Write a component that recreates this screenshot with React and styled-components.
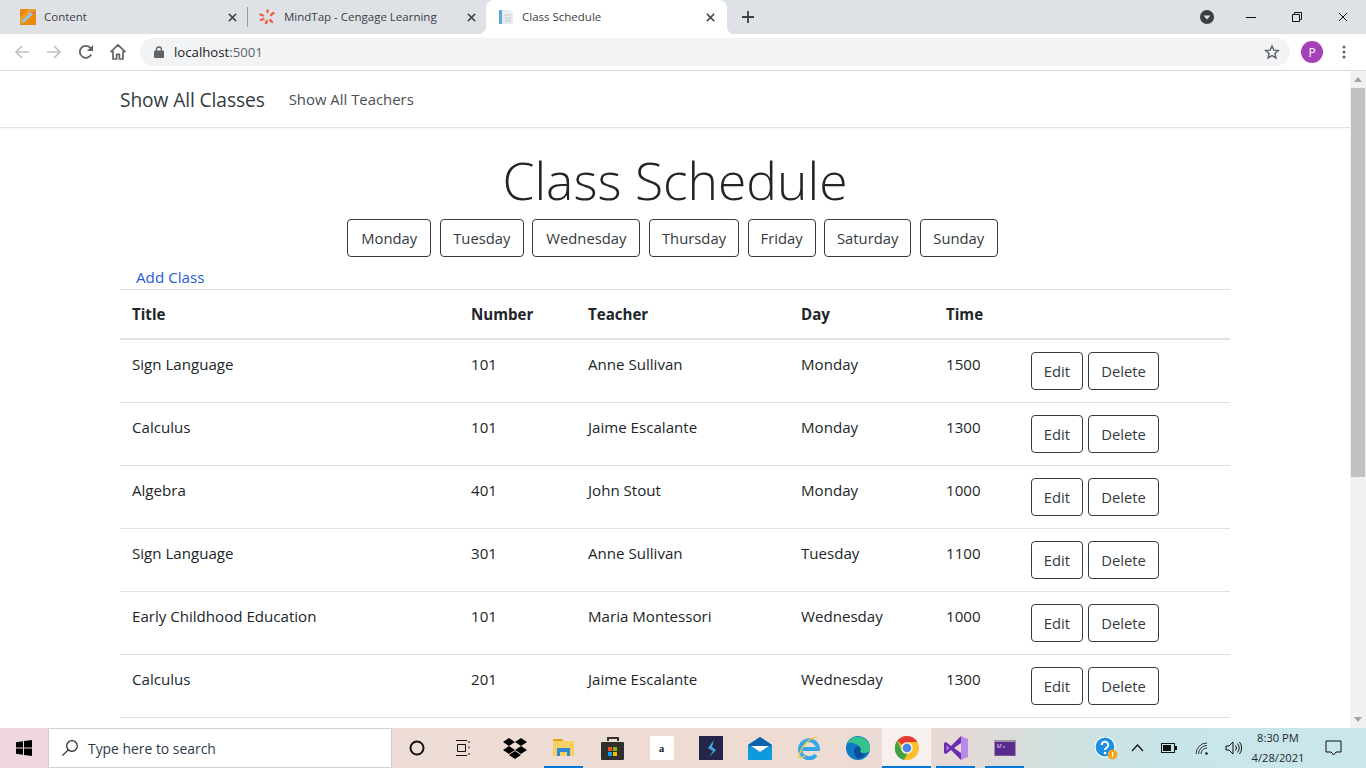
import React from "react";
import styled, { createGlobalStyle } from "styled-components";

const Global = createGlobalStyle`
  html, body { margin: 0; padding: 0; height: 100%; overflow: hidden; background: #fff; }
  #root { height: 100vh; }
  * { box-sizing: border-box; }
`;

const UI = `"Open Sans", "Noto Sans", sans-serif`;

const Screen = styled.div`
  width: 1366px; height: 768px; display: flex; flex-direction: column;
  font-family: ${UI}; color: #212529; overflow: hidden;
`;
const TabStrip = styled.div`
  height: 34px; background: #dee1e6; display: flex; align-items: stretch; flex: none; position: relative;
`;
const Tab = styled.div`
  width: ${p => p.$w}px; flex: none; display: flex; align-items: center; position: relative;
  padding-left: ${p => p.$pl}px; padding-right: ${p => p.$pr}px; gap: 8px;
  font-size: 11.5px; color: #3c4043;
  ${p => p.$active && `
    background:#fff; border-radius: 8px 8px 0 0;
    &::before, &::after { content:""; position:absolute; bottom:0; width:8px; height:8px; }
    &::before { left:-8px; background: radial-gradient(circle at 0 0, transparent 8px, #fff 8.5px); }
    &::after { right:-8px; background: radial-gradient(circle at 100% 0, transparent 8px, #fff 8.5px); }
  `}
`;
const TabLabel = styled.span`flex: 1; white-space: nowrap; overflow: hidden; padding-bottom: 2px;`;
const TabDivider = styled.div`width: 1px; height: 20px; background: #9a9ca0; align-self: center; flex: none;`;
const NewTab = styled.div`width: 42px; display: flex; align-items: center; justify-content: center; flex: none;`;
const WindowRight = styled.div`margin-left: auto; display: flex; align-items: center;`;
const WinBtn = styled.div`width: 46px; height: 30px; display: flex; align-items: center; justify-content: center;`;
const ProfileDrop = styled.div`margin-right: 14px; display: flex;`;

const Toolbar = styled.div`
  height: 37px; background: #fff; display: flex; align-items: center; flex: none;
  border-bottom: 1px solid #dadce0; padding: 0 0 0 6px;
`;
const NavIcon = styled.div`width: 32px; height: 28px; display: flex; align-items: center; justify-content: center; flex: none;`;
const Omnibox = styled.div`
  width: 1150px; height: 28px; margin-left: 6px; background: #f1f3f4; border-radius: 14px; display: flex; align-items: center;
  padding: 0 10px 0 14px; gap: 10px; font-size: 13.2px; color: #202124; flex: none;
`;
const Port = styled.span`color: #5f6368;`;
const Host = styled.span`flex: 1;`;
const Avatar = styled.div`
  width: 22px; height: 22px; border-radius: 50%; background: #a642b8; color: #fff; font-size: 12px;
  display: flex; align-items: center; justify-content: center; margin-left: 11px; flex: none;
`;
const Kebab = styled.div`margin-left: 19px; display: flex;`;

const Viewport = styled.div`flex: 1; min-height: 0; display: flex; overflow: hidden;`;
const Page = styled.div`flex: 1; min-width: 0; overflow: hidden;`;
const Scrollbar = styled.div`
  width: 16px; flex: none; background: #f1f1f1; display: flex; flex-direction: column; align-items: center;
`;
const ScrollArrow = styled.div`height: 17px; flex: none; display: flex; align-items: center; justify-content: center;`;
const Thumb = styled.div`width: 14px; height: 389px; flex: none; background: #c1c1c1;`;
const ScrollGap = styled.div`flex: 1;`;

const Nav = styled.nav`
  height: 57px; border-bottom: 1px solid #dee2e6; box-shadow: 0 1px 3px rgba(0,0,0,.05);
  padding: 0 120px; display: flex; align-items: center; gap: 24px; 
`;
const Brand = styled.a`font-size: 19.2px; color: #343a40; letter-spacing: -0.1px;`;
const NavLink = styled.a`font-size: 14.9px; color: #4a4f54;`;
const Container = styled.main`width: 1110px; margin-left: 120px;`;
const Title = styled.h1`
  margin: 19px 0 0; font-size: 51.6px; line-height: 66px; font-weight: 300; text-align: center; color: #212529;
`;
const DayRow = styled.div`display: flex; justify-content: center; gap: 8.6px; margin-top: 6px; padding-right: 5px;`;
const OutlineButton = styled.button`
  height: 38px; width: ${p => p.$w}px; padding: 0; background: #fff; border: 1px solid #343a40; border-radius: 4px;
  font: 400 14.8px ${UI}; color: #343a40; flex: none;
`;
const AddLink = styled.a`display: block; margin: 10px 0 0 16px; height: 22px; line-height: 20px; font-size: 15.2px; color: #2a5bd7;`;
const Table = styled.table`width: 1110px; table-layout: fixed; border-collapse: collapse; font-size: 15.1px;`;
const Col = styled.col`width: ${p => p.$w}px;`;
const Th = styled.th`
  height: 49px; padding: 0 12px; text-align: left; font-weight: 700; color: #212529;
  border-top: 1px solid #dee2e6; border-bottom: 2px solid #dee2e6;
`;
const Td = styled.td`
  height: 63px; padding: 12px; vertical-align: top; line-height: 24px; border-bottom: 1px solid #dee2e6; white-space: nowrap;
`;
const Actions = styled.div`display: flex; gap: 5px;`;

const Taskbar = styled.div`
  height: 40px; flex: none; display: flex; align-items: center;
  background: linear-gradient(90deg, #efd6df 0%, #eeddd6 30%, #eedcd3 60%, #e6d8d6 70%, #cfe0e0 78%, #c8e5e9 86%, #c9e6ea 100%);
`;
const StartBtn = styled.div`width: 48px; height: 40px; display: flex; align-items: center; justify-content: center; flex: none;`;
const SearchBox = styled.div`
  width: 344px; height: 40px; background: #fff; border: 1px solid #cfcfcf; display: flex; align-items: center; padding-left: 12px; gap: 9px;
  font-size: 13.9px; color: #2b3a4a; flex: none;
`;
const TaskIcon = styled.div`
  width: ${p => p.$w || 49}px; height: 40px; flex: none; display: flex; align-items: center; justify-content: center; position: relative;
  padding-right: ${p => p.$pr || 0}px;
  ${p => p.$focus && `background: rgba(255,255,255,.6);`}
  ${p => p.$open && `&::after{content:"";position:absolute;left:${p.$inset || 0}px;right:${p.$inset || 0}px;bottom:0;height:2px;background:#0078d7;}`}
`;
const Tray = styled.div`margin-left: auto; display: flex; align-items: center; padding-right: 11px;`;
const TrayIcon = styled.div`width: ${p => p.$w || 24}px; height: 40px; display: flex; align-items: center; justify-content: center; flex: none;`;
const Clock = styled.div`
  width: 66px; text-align: center; font-size: 11.2px; line-height: 20px; color: #1f2a30; flex: none;
`;
const AmazonTile = styled.div`
  width: 24px; height: 24px; background: #fff; color: #222; font: 700 11px "Liberation Serif", serif; display: flex; align-items: center; justify-content: center;
`;

const X = ({ s = 9, c = "#45484c", w = 1.7 }) => (
  <svg width={s} height={s} viewBox="0 0 10 10"><path d="M1 1l8 8M9 1l-8 8" stroke={c} strokeWidth={w} fill="none" /></svg>
);

const PencilIcon = () => (
  <svg width="16" height="16" viewBox="0 0 16 16">
    <rect width="16" height="16" rx="1" fill="#e8890c" />
    <path d="M0 16V9l9-9h7L0 16z" fill="#f3a53a" opacity=".7" />
    <path d="M3 11L11 3l2 2-8 8-3 1z" fill="#8fc9e8" />
    <path d="M11 3l1-1 2 2-1 1z" fill="#d85bb0" />
  </svg>
);
const MindTapIcon = () => (
  <svg width="18" height="16" viewBox="0 0 18 16" fill="none" stroke="#f0603a" strokeWidth="2.4" strokeLinecap="round">
    <path d="M9.500 1.500v1.500M13 6l2.500-2M2.500 5.500l2.500 1M3 11l2.500-1M8 14l.8-2M14 13l-1.800-2" />
  </svg>
);
const DocIcon = () => (
  <svg width="16" height="16" viewBox="0 0 16 16">
    <rect x="1" y="1" width="3" height="14" fill="#5fa8dc" />
    <path d="M4 1h8l3 3v11H4z" fill="#e8edf2" />
    <path d="M6 6h7M6 9h7" stroke="#c5ccd4" />
    <rect x="7" y="10.5" width="6" height="3" fill="#d5dbe2" />
  </svg>
);
const Back = ({ flip }) => (
  <svg width="16" height="16" viewBox="0 0 16 16" fill="none" stroke="#bdc1c6" strokeWidth="1.7" style={flip ? { transform: "scaleX(-1)" } : undefined}>
    <path d="M15 8H2M8 2L2 8l6 6" />
  </svg>
);
const Reload = () => (
  <svg width="16" height="16" viewBox="0 0 16 16" fill="none">
    <path d="M13.2 10.5A6 6 0 1 1 12.3 3.8L14 5.5" stroke="#5f6368" strokeWidth="1.8" />
    <path d="M15 1v6h-6z" fill="#5f6368" />
  </svg>
);
const Home = () => (
  <svg width="18" height="18" viewBox="0 0 18 18" fill="none" stroke="#5f6368" strokeWidth="1.7">
    <path d="M1.5 9.2L9 2l7.5 7.2M4 8v8h3.6v-4.6h2.800V16H14V8" />
  </svg>
);
const Lock = () => (
  <svg width="10" height="12" viewBox="0 0 10 12"><path d="M2.500 5V3.500a2.500 2.500 0 0 1 5 0V5" stroke="#5f6368" fill="none" strokeWidth="1.3" /><rect y="4.5" width="10" height="7.5" rx="1" fill="#5f6368" /></svg>
);
const Star = () => (
  <svg width="16" height="16" viewBox="0 0 24 24" fill="none" stroke="#5f6368" strokeWidth="2.2">
    <path d="M12 3l2.700 6.200 6.800.6-5.100 4.500 1.500 6.600L12 17.400l-5.900 3.500 1.500-6.600L2.500 9.800l6.800-.6z" />
  </svg>
);
const Dots = () => (
  <svg width="4" height="14" viewBox="0 0 4 14" fill="#5f6368"><circle cx="2" cy="2" r="1.5" /><circle cx="2" cy="7" r="1.5" /><circle cx="2" cy="12" r="1.5" /></svg>
);
const WinLogo = () => (
  <svg width="16" height="16" viewBox="0 0 16 16" fill="#000"><path d="M0 2.200l7-1v6.300H0zM8 1l8-1v7.500H8zM0 8.500h7v6.300l-7-1zM8 8.500h8V16l-8-1z" /></svg>
);
const SearchGlass = () => (
  <svg width="18" height="18" viewBox="0 0 18 18" fill="none" stroke="#222" strokeWidth="1.2"><circle cx="11" cy="7" r="5.300" /><path d="M7.200 10.800L1.400 16.600" /></svg>
);
const Dropbox = () => (
  <svg width="24" height="21" viewBox="0 0 24 21" fill="#000"><path d="M6 0l6 4-6 4-6-4zM18 0l6 4-6 4-6-4zM6 8l6 4-6 4-6-4zM18 8l6 4-6 4-6-4zM12 13l6 4-6 4-6-4z" /></svg>
);
const Folder = () => (
  <svg width="22" height="20" viewBox="0 0 22 20">
    <path d="M0 1h9l2 2H0z" fill="#dca11e" /><rect y="3" width="21" height="15" fill="#f7cf63" />
    <path d="M4 10h13v8h-3v-4H7v4H4z" fill="#2f8ad2" />
  </svg>
);
const Store = () => (
  <svg width="24" height="24" viewBox="0 0 24 24">
    <path d="M7 5V2h10v3" stroke="#333" strokeWidth="2" fill="none" /><rect y="6" width="23" height="18" rx="1" fill="#2f2f2f" />
    <rect x="7" y="11" width="4" height="4" fill="#f25022" /><rect x="12" y="11" width="4" height="4" fill="#7fba00" />
    <rect x="7" y="16" width="4" height="4" fill="#00a4ef" /><rect x="12" y="16" width="4" height="4" fill="#ffb900" />
  </svg>
);
const Bolt = () => (
  <svg width="24" height="24" viewBox="0 0 24 24"><rect width="24" height="24" fill="#25254a" /><path d="M15 4l-6 8 5 3-4 6 7-7-4-3z" fill="#3fa9e6" /></svg>
);
const Mail = () => (
  <svg width="24" height="23" viewBox="0 0 24 23">
    <path d="M0 8L12 0l12 8v15H0z" fill="#0f9ae0" /><path d="M0 8L12 0l12 8-12 7z" fill="#0b63ae" />
    <path d="M3 9h18l-9 6z" fill="#fff" />
  </svg>
);
const IE = () => (
  <svg width="24" height="24" viewBox="0 0 24 24" fill="none">
    <path d="M4 13h17a9 9 0 1 0-2 6" stroke="#35a7e8" strokeWidth="4" />
    <path d="M20 2C15 0 5 8 2 20c0 2 3 2 6 0" stroke="#f5c542" strokeWidth="1.4" />
  </svg>
);
const Edge = () => (
  <svg width="24" height="24" viewBox="0 0 24 24">
    <circle cx="12" cy="12" r="12" fill="#0d78c6" />
    <path d="M1.500 7A12 12 0 0 1 24 12c0 3-2.500 5-6 5-2.500 0-4-1-4-2 1-1 1-3-.5-4.500C10 7 5 6 1.500 7z" fill="#35c48a" />
    <path d="M8 14.500c0-3 3-4.500 5.500-4 1.500 1.500 1.500 3.500.5 4.500 0 2 3 3 5.500 2.200C17.500 21 14 23 11 22.500 9 20 8 17 8 14.500z" fill="#0a4f9a" />
  </svg>
);
const ChromeIcon = () => (
  <svg width="24" height="24" viewBox="0 0 24 24">
    <circle cx="12" cy="12" r="12" fill="#fbc02d" />
    <path d="M12 0a12 12 0 0 1 10.400 6H12a6 6 0 0 0-5.200 3L2.500 4.600A12 12 0 0 1 12 0z" fill="#e53935" />
    <path d="M2.500 4.600L6.800 15A6 6 0 0 0 12 18l-3 6A12 12 0 0 1 2.500 4.600z" fill="#43a047" />
    <circle cx="12" cy="12" r="5.600" fill="#fff" /><circle cx="12" cy="12" r="4.400" fill="#4a84e8" />
  </svg>
);
const VS = () => (
  <svg width="24" height="24" viewBox="0 0 24 24">
    <path d="M17 0l7 3v18l-7 3z" fill="#b88be8" /><path d="M17 0L7 10 2 6 0 7v10l2 1 5-4 10 10v-7l-7-5 7-5z" fill="#6a2fb0" />
    <path d="M2.500 9.500L5.500 12l-3 2.500z" fill="#b88be8" />
  </svg>
);
const Terminal = () => (
  <svg width="22" height="16" viewBox="0 0 22 16"><rect width="22" height="16" fill="#9a93a5" /><rect x="1" y="2" width="20" height="13.600" fill="#5b2a8e" /><path d="M3 5h2M6 5h2M3 7h4M9 7h2" stroke="#d8cfe8" strokeWidth="1" /></svg>
);
const Help = () => (
  <svg width="23" height="23" viewBox="0 0 23 23">
    <circle cx="10" cy="10" r="10" fill="#1a8fe3" stroke="#fff" strokeWidth="1.2" />
    <path d="M6.800 8a3.200 3.200 0 1 1 4.700 2.800c-1 .6-1.500 1-1.500 2.200" stroke="#fff" strokeWidth="2" fill="none" /><circle cx="10" cy="16" r="1.300" fill="#fff" />
    <circle cx="17.500" cy="17.500" r="5" fill="#f2a51d" /><rect x="17" y="15" width="1.200" height="5" fill="#fff" />
  </svg>
);
const Chevron = () => (
  <svg width="13" height="8" viewBox="0 0 13 8" fill="none" stroke="#111" strokeWidth="1.2"><path d="M1 7l5.500-6L12 7" /></svg>
);
const Battery = () => (
  <svg width="16" height="10" viewBox="0 0 16 10"><rect x=".5" y=".5" width="13" height="9" fill="none" stroke="#111" /><rect x="2" y="2" width="8" height="6" fill="#111" /><rect x="14" y="3" width="2" height="4" fill="#111" /></svg>
);
const Wifi = () => (
  <svg width="14" height="13" viewBox="0 0 14 13" fill="none" stroke="#333" strokeWidth="1"><path d="M1 12A11 11 0 0 1 12 1M3.500 12A8.500 8.500 0 0 1 12 3.500M6 12a6 6 0 0 1 6-6" /><circle cx="11.500" cy="11.500" r="1.300" fill="#222" stroke="none" /></svg>
);
const Speaker = () => (
  <svg width="17" height="14" viewBox="0 0 17 14" fill="none" stroke="#111" strokeWidth="1"><path d="M1 5v4h3l4 4V1L4 5zM10.500 4.500a4 4 0 0 1 0 5M12.500 2.500a7 7 0 0 1 0 9M14.500 1a9.500 9.500 0 0 1 0 12" /></svg>
);
const Notice = () => (
  <svg width="17" height="16" viewBox="0 0 17 16" fill="none" stroke="#111" strokeWidth="1"><path d="M1 1h15v11h-5l-2.500 3L6 12H1z" /></svg>
);
const TriUp = ({ d }) => (
  <svg width="8" height="5" viewBox="0 0 8 5" fill="#a3a3a3" style={d ? { transform: "rotate(180deg)" } : undefined}><path d="M4 0l4 5H0z" /></svg>
);

const days = [["Monday", 84], ["Tuesday", 84], ["Wednesday", 108], ["Thursday", 90], ["Friday", 68], ["Saturday", 87], ["Sunday", 78]];
const rows = [
  ["Sign Language", 101, "Anne Sullivan", "Monday", 1500],
  ["Calculus", 101, "Jaime Escalante", "Monday", 1300],
  ["Algebra", 401, "John Stout", "Monday", 1000],
  ["Sign Language", 301, "Anne Sullivan", "Tuesday", 1100],
  ["Early Childhood Education", 101, "Maria Montessori", "Wednesday", 1000],
  ["Calculus", 201, "Jaime Escalante", "Wednesday", 1300],
];

export default function App() {
  return (
    <Screen>
      <Global />
      <TabStrip>
        <Tab $w={247} $pl={20} $pr={10}><PencilIcon /><TabLabel>Content</TabLabel><X /></Tab>
        <TabDivider />
        <Tab $w={238} $pl={10} $pr={10}><MindTapIcon /><TabLabel>MindTap - Cengage Learning</TabLabel><X /></Tab>
        <Tab $w={241} $pl={12} $pr={12} $active><DocIcon /><TabLabel>Class Schedule</TabLabel><X /></Tab>
        <NewTab><svg width="14" height="14" viewBox="0 0 14 14"><path d="M7 1v12M1 7h12" stroke="#3c4043" strokeWidth="1.8" /></svg></NewTab>
        <WindowRight>
          <ProfileDrop>
            <svg width="14" height="14" viewBox="0 0 14 14"><circle cx="7" cy="7" r="7" fill="#3c4043" /><path d="M3.500 5.500h7L7 9.500z" fill="#dee1e6" /></svg>
          </ProfileDrop>
          <WinBtn><svg width="10" height="1" viewBox="0 0 10 1"><rect width="10" height="1" fill="#111" /></svg></WinBtn>
          <WinBtn><svg width="10" height="10" viewBox="0 0 10 10" fill="none" stroke="#111"><path d="M.5 2.500h7v7h-7zM2.500 2.500v-2h7v7h-2" /></svg></WinBtn>
          <WinBtn><X s={10} c="#111" w={1} /></WinBtn>
        </WindowRight>
      </TabStrip>
      <Toolbar>
        <NavIcon><Back /></NavIcon>
        <NavIcon><Back flip /></NavIcon>
        <NavIcon><Reload /></NavIcon>
        <NavIcon><Home /></NavIcon>
        <Omnibox>
          <Lock />
          <Host>localhost<Port>:5001</Port></Host>
          <Star />
        </Omnibox>
        <Avatar>P</Avatar>
        <Kebab><Dots /></Kebab>
      </Toolbar>
      <Viewport>
        <Page>
          <Nav>
            <Brand>Show All Classes</Brand>
            <NavLink>Show All Teachers</NavLink>
          </Nav>
          <Container>
            <Title>Class Schedule</Title>
            <DayRow>
              {days.map(([d, w]) => <OutlineButton key={d} $w={w}>{d}</OutlineButton>)}
            </DayRow>
            <AddLink>Add Class</AddLink>
            <Table>
              <colgroup>
                <Col $w={339} /><Col $w={117} /><Col $w={213} /><Col $w={145} /><Col $w={85} /><Col $w={211} />
              </colgroup>
              <thead>
                <tr><Th>Title</Th><Th>Number</Th><Th>Teacher</Th><Th>Day</Th><Th>Time</Th><Th /></tr>
              </thead>
              <tbody>
                {rows.map((r, i) => (
                  <tr key={i}>
                    {r.map((c, j) => <Td key={j}>{c}</Td>)}
                    <Td>
                      <Actions>
                        <OutlineButton $w={52}>Edit</OutlineButton>
                        <OutlineButton $w={71}>Delete</OutlineButton>
                      </Actions>
                    </Td>
                  </tr>
                ))}
              </tbody>
            </Table>
          </Container>
        </Page>
        <Scrollbar>
          <ScrollArrow><TriUp /></ScrollArrow>
          <Thumb />
          <ScrollGap />
          <ScrollArrow><TriUp d /></ScrollArrow>
        </Scrollbar>
      </Viewport>
      <Taskbar>
        <StartBtn><WinLogo /></StartBtn>
        <SearchBox><SearchGlass />Type here to search</SearchBox>
        <TaskIcon $w={50}><svg width="16" height="16" viewBox="0 0 16 16" fill="none" stroke="#111" strokeWidth="2"><circle cx="8" cy="8" r="6.500" /></svg></TaskIcon>
        <TaskIcon $w={48} $pr={6}><svg width="16" height="16" viewBox="0 0 16 16" fill="none" stroke="#111"><path d="M1 .5h11M2.500 4.500h8v7h-8zM1 15.500h11M14 1v2M14 6.500v2M14 13v2" /></svg></TaskIcon>
        <TaskIcon><Dropbox /></TaskIcon>
        <TaskIcon $open $inset={5}><Folder /></TaskIcon>
        <TaskIcon><Store /></TaskIcon>
        <TaskIcon><AmazonTile>a</AmazonTile></TaskIcon>
        <TaskIcon><Bolt /></TaskIcon>
        <TaskIcon><Mail /></TaskIcon>
        <TaskIcon><IE /></TaskIcon>
        <TaskIcon><Edge /></TaskIcon>
        <TaskIcon $focus $open><ChromeIcon /></TaskIcon>
        <TaskIcon $open $inset={5}><VS /></TaskIcon>
        <TaskIcon $open $inset={5}><Terminal /></TaskIcon>
        <Tray>
          <TrayIcon $w={26}><Help /></TrayIcon>
          <TrayIcon $w={36}><Chevron /></TrayIcon>
          <TrayIcon $w={28}><Battery /></TrayIcon>
          <TrayIcon $w={38}><Wifi /></TrayIcon>
          <TrayIcon $w={24}><Speaker /></TrayIcon>
          <Clock>8:30 PM<br />4/28/2021</Clock>
          <TrayIcon $w={44}><Notice /></TrayIcon>
        </Tray>
      </Taskbar>
    </Screen>
  );
}
